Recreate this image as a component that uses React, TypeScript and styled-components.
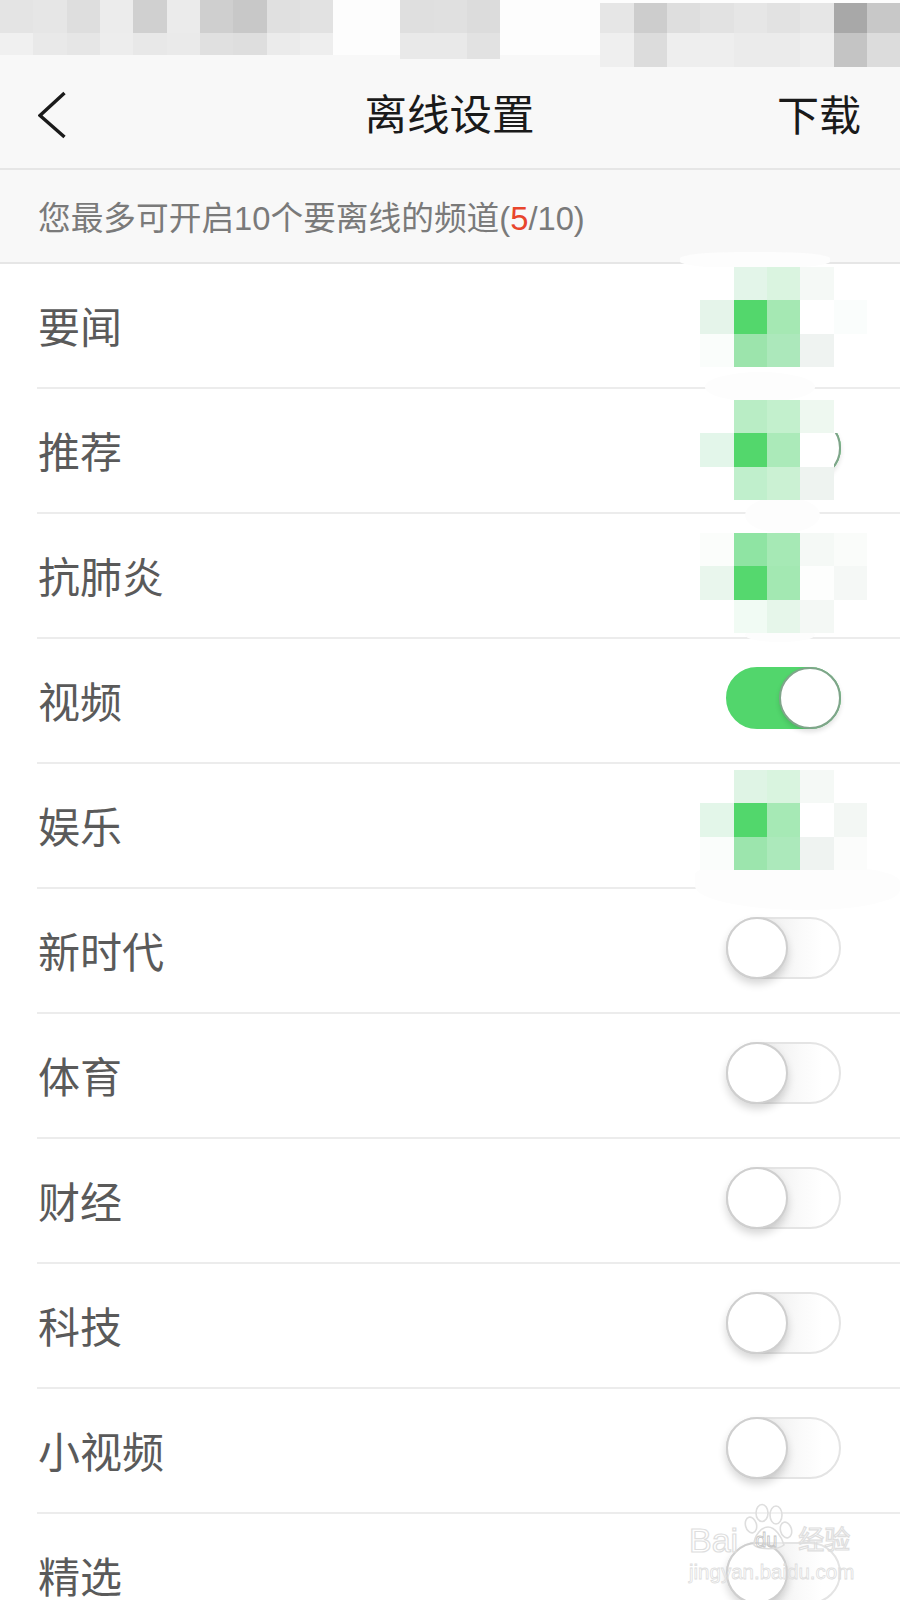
import styled, { createGlobalStyle } from "styled-components";

const GlobalStyle = createGlobalStyle`
  html, body {
    margin: 0;
    padding: 0;
    background: #fff;
  }
`;

const FONT = `"Liberation Sans", "Noto Sans CJK SC", sans-serif`;

const Page = styled.div`
  position: relative;
  width: 900px;
  height: 1600px;
  overflow: hidden;
  background: #fff;
  font-family: ${FONT};
`;

const Top = styled.header`
  background: #f8f8f8;
  border-bottom: 2px solid #e6e6e6;
`;

const StatusBar = styled.div`
  display: flex;
  align-items: flex-start;
  height: 55px;
  background: #fdfdfd;
`;

const Nav = styled.div`
  display: grid;
  grid-template-columns: 1fr auto 1fr;
  align-items: center;
  box-sizing: border-box;
  height: 113px;
  padding: 10px 39px 0 38px;
`;

const Title = styled.div`
  font-size: 42.5px;
  color: #1a1a1a;
  line-height: 1;
`;

const Download = styled.div`
  justify-self: end;
  font-size: 42px;
  color: #1a1a1a;
  line-height: 1;
`;

const SubBar = styled.div`
  display: flex;
  align-items: center;
  box-sizing: border-box;
  height: 94px;
  padding: 0 0 2px 38px;
  background: #f8f8f8;
  border-bottom: 2px solid #e6e6e6;
  font-size: 32.7px;
  color: #7a7a7a;
`;

const Count = styled.span`
  color: #e8452c;
`;

const Row = styled.div`
  position: relative;
  display: flex;
  align-items: center;
  justify-content: space-between;
  box-sizing: border-box;
  height: 125px;
  margin-left: 37px;
  padding-right: 59px;
  border-bottom: 2px solid #ececec;
`;

const Label = styled.div`
  font-size: 42px;
  color: #5a5a5a;
  line-height: 1;
  margin: 6px 0 0 1px;
`;

const Track = styled.div<{ $on: boolean }>`
  position: relative;
  box-sizing: border-box;
  width: 115px;
  height: 62px;
  margin-top: -6px;
  border-radius: 31px;
  border: 2px solid ${(p) => (p.$on ? "#52d66c" : "#e4e4e4")};
  background: ${(p) =>
    p.$on ? "#52d66c" : "linear-gradient(90deg, #f0f0f0 40%, #fafafa 65%, #fff 85%)"};
`;

const Knob = styled.div<{ $on: boolean }>`
  position: absolute;
  top: -2px;
  ${(p) => (p.$on ? "right: -2px;" : "left: -2px;")}
  box-sizing: border-box;
  width: 62px;
  height: 62px;
  border-radius: 50%;
  background: #fff;
  border: 2px solid ${(p) => (p.$on ? "#7fa58a" : "#cfcfcf")};
  box-shadow: ${(p) =>
    p.$on ? "0 3px 5px rgba(0, 0, 0, 0.12)" : "0 5px 8px rgba(0, 0, 0, 0.16)"};
`;

const Mosaic = styled.div<{ $cols: number; $rows: string; $top?: number; $left?: number }>`
  display: grid;
  grid-template-columns: repeat(${(p) => p.$cols}, 33.33px);
  grid-template-rows: ${(p) => p.$rows};
  ${(p) => (p.$top !== undefined ? `margin-top: ${p.$top}px;` : "")}
  ${(p) => (p.$left !== undefined ? `margin-left: ${p.$left}px;` : "")}
`;

const RowMosaic = styled(Mosaic)`
  position: absolute;
  right: 33px;
  z-index: 2;
  margin-top: 0;
  top: ${(p) => p.$top}px;
`;

const Tile = styled.div<{ $color: string }>`
  background: ${(p) => p.$color};
`;

// soft white smudge left around the blurred-out switches
const Haze = styled.div<{ $x: number; $y: number; $w: number; $h: number; $radius?: string }>`
  position: absolute;
  left: ${(p) => p.$x}px;
  top: ${(p) => p.$y}px;
  width: ${(p) => p.$w}px;
  height: ${(p) => p.$h}px;
  border-radius: ${(p) => p.$radius ?? "50%"};
  background: #fdfdfd;
  z-index: 1;
`;

const BackButton = styled.svg`
  margin-top: -4px;
`;

const Watermark = styled.div`
  position: absolute;
  left: 689px;
  top: 1503px;
  width: 165px;
  z-index: 3;
  color: transparent;
`;

const Paw = styled.svg`
  position: absolute;
  left: 55px;
  top: 0;
`;

const MarkMain = styled.div`
  display: flex;
  align-items: center;
  margin-top: 20px;
  font-size: 34px;
  line-height: 34px;
  -webkit-text-stroke: 1.2px #dedede;
  white-space: nowrap;
`;

const MarkDu = styled.span`
  position: relative;
  width: 43px;
  margin-left: 17px;
  font-size: 20px;
  -webkit-text-stroke: 0.8px #c4c4c4;
`;

const MarkCn = styled.span`
  font-size: 26px;
`;

const MarkSub = styled.div`
  margin-top: 4px;
  font-size: 20.5px;
  line-height: 22px;
  -webkit-text-stroke: 0.8px #dedede;
  white-space: nowrap;
`;

const statusLeft = [
  "#e4e4e4", "#e6e6e6", "#dedede", "#ececec", "#d0d0d0", "#ebebeb", "#cfcfcf", "#c8c8c8", "#e0e0e0", "#e2e2e2",
  "#f0f0f0", "#e9e9e9", "#e6e6e6", "#ededed", "#e8e8e8", "#eaeaea", "#e0e0e0", "#dedede", "#ebebeb", "#eeeeee",
];
const statusMid = ["#dfdfdf", "#e0e0e0", "#dcdcdc", "#e9e9e9", "#e9e9e9", "#e2e2e2"];
const statusRight = [
  "#e6e6e6", "#cdcdcd", "#dedede", "#e2e2e2", "#e6e6e6", "#e2e2e2", "#e6e6e6", "#a8a8a8", "#c8c8c8",
  "#efefef", "#dcdcdc", "#eeeeee", "#eeeeee", "#ebebeb", "#ebebeb", "#eeeeee", "#c4c4c4", "#dcdcdc",
];

interface Channel {
  name: string;
  on: boolean;
  tiles?: string[];
  top?: number;
}

const channels: Channel[] = [
  {
    name: "要闻",
    on: true,
    top: 3,
    tiles: [
      "#fff", "#e3f5e9", "#daf4e0", "#f5f9f6", "#fff",
      "#e5f4ea", "#53d76c", "#a5e8b3", "#fff", "#fafdfc",
      "#fafdfb", "#9ce4ac", "#ace8bb", "#eff3f1", "#fff",
    ],
  },
  {
    name: "推荐",
    on: true,
    top: 11,
    tiles: [
      "#fff", "#b9edc5", "#c3f0cd", "#eef8f0", "#fff",
      "#e3f6ea", "#53d76c", "#abeab9", "#fff", "transparent",
      "#fff", "#c0efcc", "#cbf1d3", "#eef3f0", "transparent",
    ],
  },
  {
    name: "抗肺炎",
    on: true,
    top: 19,
    tiles: [
      "#fbfdfb", "#8fe4a3", "#a6e9b5", "#f5f9f6", "#fafcfa",
      "#e9f6ed", "#55d86e", "#a3e8b2", "#fdfefd", "#f5f8f6",
      "#fff", "#f1fbf4", "#e6f6ea", "#f4f8f5", "#fff",
    ],
  },
  { name: "视频", on: true },
  {
    name: "娱乐",
    on: true,
    top: 6,
    tiles: [
      "#fff", "#dff4e5", "#d9f4df", "#f5f9f6", "#fff",
      "#e3f6e9", "#52d76c", "#a6e9b5", "#fff", "#f3f7f4",
      "#fafdfb", "#9ce5ad", "#ace9bb", "#eff3f1", "#fbfcfb",
    ],
  },
  { name: "新时代", on: false },
  { name: "体育", on: false },
  { name: "财经", on: false },
  { name: "科技", on: false },
  { name: "小视频", on: false },
  { name: "精选", on: false },
];

function BackIcon() {
  return (
    <BackButton width="30" height="48" viewBox="0 0 30 48">
      <path d="M26.5 2 L2 24.5 L26.5 46" fill="none" stroke="#1a1a1a" strokeWidth="3.4" />
    </BackButton>
  );
}

function PawMark() {
  return (
    <Paw width="50" height="48" viewBox="0 0 50 48">
      <g fill="rgba(255,255,255,0.3)" stroke="#dedede" strokeWidth="1.6">
        <ellipse cx="18" cy="10" rx="6" ry="8.5" />
        <ellipse cx="32" cy="12" rx="6" ry="9" />
        <ellipse cx="7" cy="22" rx="5.5" ry="8" transform="rotate(-15 7 22)" />
        <ellipse cx="42" cy="27" rx="5.5" ry="8" transform="rotate(-15 42 27)" />
        <path d="M10 42 C10 32 18 24 24 24 C31 24 38 34 40 42 C34 47 15 47 10 42 Z" />
      </g>
    </Paw>
  );
}

export default function App() {
  return (
    <Page>
      <GlobalStyle />
      <Top>
        <StatusBar>
          <Mosaic $cols={10} $rows="33px 22px">
            {statusLeft.map((c, i) => (
              <Tile key={i} $color={c} />
            ))}
          </Mosaic>
          <Mosaic $cols={3} $rows="33px 26px" $left={67}>
            {statusMid.map((c, i) => (
              <Tile key={i} $color={c} />
            ))}
          </Mosaic>
          <Mosaic $cols={9} $rows="30px 34px" $left={100} $top={3}>
            {statusRight.map((c, i) => (
              <Tile key={i} $color={c} />
            ))}
          </Mosaic>
        </StatusBar>
        <Nav>
          <BackIcon />
          <Title>离线设置</Title>
          <Download>下载</Download>
        </Nav>
      </Top>
      <SubBar>
        <span>
          您最多可开启10个要离线的频道(<Count>5</Count>/10)
        </span>
      </SubBar>
      {channels.map((ch) => (
        <Row key={ch.name}>
          <Label>{ch.name}</Label>
          <Track $on={ch.on}>
            <Knob $on={ch.on} />
          </Track>
          {ch.tiles && (
            <RowMosaic $cols={5} $rows="repeat(3, 33.33px)" $top={ch.top}>
              {ch.tiles.map((c, i) => (
                <Tile key={i} $color={c} />
              ))}
            </RowMosaic>
          )}
        </Row>
      ))}
      <Haze $x={680} $y={252} $w={150} $h={16} $radius="40%" />
      <Haze $x={705} $y={372} $w={110} $h={30} />
      <Haze $x={745} $y={497} $w={75} $h={36} />
      <Haze $x={703} $y={533} $w={162} $h={100} />
      <Haze $x={745} $y={628} $w={70} $h={14} />
      <Haze $x={695} $y={866} $w={205} $h={44} $radius="20% 40% 50% 60%" />
      <Watermark>
        <PawMark />
        <MarkMain>
          Bai<MarkDu>du</MarkDu>
          <MarkCn>经验</MarkCn>
        </MarkMain>
        <MarkSub>jingyan.baidu.com</MarkSub>
      </Watermark>
    </Page>
  );
}
